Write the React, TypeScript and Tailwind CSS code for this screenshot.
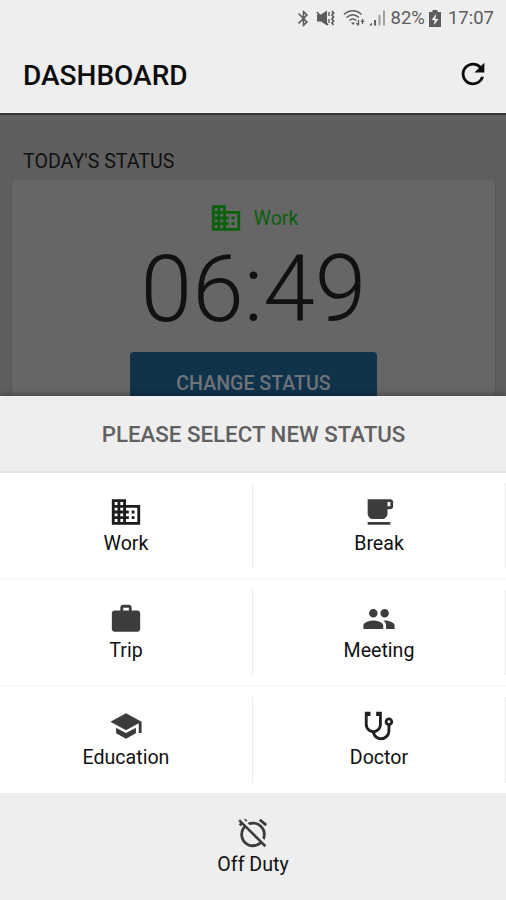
import {
  MdAlarmOff,
  MdBluetooth,
  MdBusiness,
  MdLocalCafe,
  MdPeople,
  MdRefresh,
  MdSchool,
  MdWork,
} from "react-icons/md"

const iconClass = "h-[34px] w-[34px] text-[#3c3c3c]"

function StethoscopeIcon() {
  return (
    <svg className="h-[34px] w-[34px] text-[#202020]" viewBox="0 0 24 24" fill="currentColor">
      <path d="M19 8c.56 0 1 .43 1 1a1 1 0 0 1-1 1c-.57 0-1-.45-1-1 0-.57.43-1 1-1M2 2v9c0 2.96 2.19 5.5 5.14 5.91.62 3.01 3.28 5.09 6.36 5.09a6.5 6.5 0 0 0 6.5-6.5v-3.69c1.16-.42 2-1.52 2-2.81a3 3 0 0 0-3-3 3 3 0 0 0-3 3c0 1.29.84 2.4 2 2.81v3.6c0 2.5-2 4.5-4.5 4.5-2 0-3.68-1.21-4.28-3.01C12 16.3 14 13.8 14 11V2h-4v3h2v6a4 4 0 0 1-8 0V5h2V2H2z" />
    </svg>
  )
}

const rows = [
  [
    { label: "Work", icon: <MdBusiness className="h-[34px] w-[34px] text-[#1c1c1c]" /> },
    { label: "Break", icon: <MdLocalCafe className={iconClass} /> },
  ],
  [
    { label: "Trip", icon: <MdWork className={iconClass} /> },
    { label: "Meeting", icon: <MdPeople className={iconClass} /> },
  ],
  [
    { label: "Education", icon: <MdSchool className={iconClass} /> },
    { label: "Doctor", icon: <StethoscopeIcon /> },
  ],
]

function StatusBar() {
  return (
    <div className="flex h-9 items-center justify-end pr-3 text-[18.5px] leading-none text-[#5c5c5c]">
      <MdBluetooth className="h-[19px] w-[19px]" />
      {/* Muted, vibrate */}
      <svg className="ml-[3px] h-[18px] w-5" viewBox="0 0 20 18" fill="currentColor">
        <path d="M1 5.500h4l6-4v15l-6-4H1z" />
        <path d="M1 3l11 13" stroke="currentColor" strokeWidth="1.600" />
        <path d="M13 3v4M13 10v4" stroke="currentColor" strokeWidth="1.400" />
        <path d="M16 2l1.500 2-1.500 2 1.500 2-1.500 2 1.500 2-1.500 2 1.500 2" fill="none" stroke="currentColor" strokeWidth="1.800" />
      </svg>
      {/* Wifi */}
      <svg className="ml-[7px] h-[18px] w-[22px]" viewBox="0 0 22 18" fill="none" stroke="currentColor" strokeWidth="1.500">
        <path d="M1 5.500C6 .500 13.500 .500 18.500 5.500M3.500 8.500c4-3.600 8.500-3.600 12.500 0M6.300 11.500c2.300-2 4.800-2 7 0" />
        <path d="M8 13.500h4l-2 2.500z" fill="currentColor" stroke="none" />
        <path d="M15.500 11v5M13.500 14l2 2.500M19.500 15v-5M17.800 12.300h3.500" strokeWidth="1.300" />
      </svg>
      {/* Signal */}
      <svg className="ml-[3px] h-[18px] w-[18px]" viewBox="0 0 18 18" fill="currentColor">
        <path d="M1 16.500l3-3v3zM6 11h2v5.500H6z" />
        <path d="M10.500 6h2v10.500h-2zM15 1.500h2v15h-2z" opacity=".55" />
      </svg>
      <span className="ml-[5px]">82%</span>
      <svg className="ml-[4px] h-[17px] w-3" viewBox="0 0 12 17" fill="currentColor">
        <path d="M3.500 0h5v2H12v15H0V2h3.500z" />
        <path d="M7 4L2.500 10h3L5 15l4.500-6h-3z" fill="#eee" />
      </svg>
      <span className="ml-[7px]">17:07</span>
    </div>
  )
}

export default function App() {
  return (
    <div className="flex h-[900px] w-[506px] flex-col overflow-hidden bg-[#5f5f5f] font-[Roboto,sans-serif]">
      <header className="h-[113px] shrink-0 border-b border-[#f6f6f6] bg-[#eee]">
        <StatusBar />
        <div className="flex items-start justify-between pt-[21px] pr-[16px] pl-[23px]">
          <h1 className="pt-[2px] text-[28px] leading-[34px] font-medium text-[#0d0d0d]">DASHBOARD</h1>
          <MdRefresh className="h-[34px] w-[34px] text-[#0d0d0d]" />
        </div>
      </header>

      {/* Dimmed page behind the sheet */}
      <main className="flex h-[283px] shrink-0 flex-col overflow-hidden border-t-2 border-[#343434] pr-[11px] pl-3">
        <h2 className="mt-[35px] ml-[11px] text-[19.600px] leading-6 text-[#111]">TODAY'S STATUS</h2>
        <div className="mt-[6px] flex flex-1 flex-col items-center rounded-t-sm bg-[#666] shadow-[0_1px_3px_#505050]">
          <div className="mt-[21px] flex items-center gap-[11px] text-[19.600px] text-[#0c5f0c]">
            <MdBusiness className="h-[34px] w-[34px]" />
            <span className="pt-[2px]">Work</span>
          </div>
          <div className="mt-[5px] text-[93px] leading-[100px] font-light text-[#111]">06:49</div>
          <button className="mt-3 h-[60px] w-[247px] shrink-0 rounded-t-sm bg-[#10334b] pt-1 text-[19.600px] font-medium text-[#6f7478]">
            CHANGE STATUS
          </button>
        </div>
      </main>

      <section className="flex flex-1 flex-col bg-white shadow-[0_-2px_6px_rgba(0,0,0,0.3)]">
        <div className="flex h-[77px] shrink-0 items-center justify-center border-b-2 border-[#e2e2e2] bg-[#eee] pt-[3px] pl-px text-[22.300px] font-medium text-[#616161]">
          PLEASE SELECT NEW STATUS
        </div>
        {rows.map((row) => (
          <div
            key={row[0].label}
            className="flex h-[107px] shrink-0 border-b-2 border-[#f8f8f8] py-[10px] last-of-type:h-[106px] last-of-type:border-b-0"
          >
            {row.map((item) => (
              <div
                key={item.label}
                className="flex flex-1 flex-col items-center border-r border-[#ececec] pt-3 text-[19.600px] leading-[30px] text-[#111]"
              >
                {item.icon}
                <span>{item.label}</span>
              </div>
            ))}
          </div>
        ))}
        <footer className="flex flex-1 flex-col items-center bg-[#eee] pt-[23px] text-[19.600px] leading-[30px] text-[#111]">
          <MdAlarmOff className={iconClass} />
          <span>Off Duty</span>
        </footer>
      </section>
    </div>
  )
}
